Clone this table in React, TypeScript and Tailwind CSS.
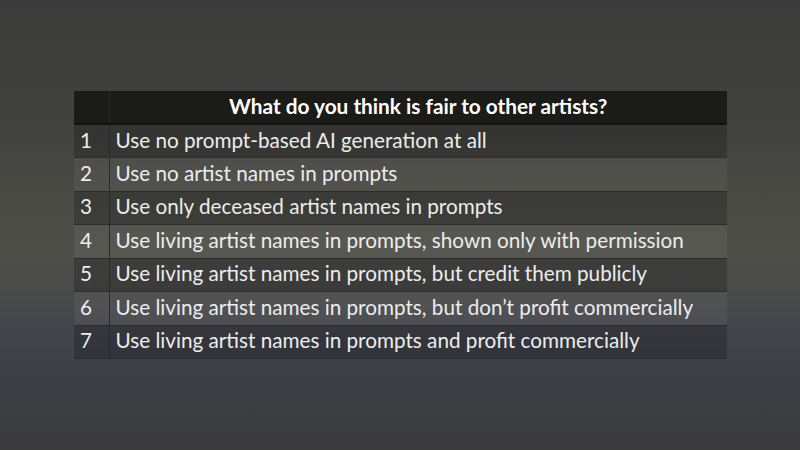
const rows = [
  'Use no prompt-based AI generation at all',
  'Use no artist names in prompts',
  'Use only deceased artist names in prompts',
  'Use living artist names in prompts, shown only with permission',
  'Use living artist names in prompts, but credit them publicly',
  'Use living artist names in prompts, but don\u2019t profit commercially',
  'Use living artist names in prompts and profit commercially',
]

export default function App() {
  return (
    <main className="w-[800px] h-[450px] overflow-hidden bg-[linear-gradient(180deg,#3b3b3b_0%,#42423f_30%,#4f4f49_55%,#46474a_70%,#3f424a_78%,#3a3a3b_100%)] pt-[91px] pl-[74px] font-['Lato',sans-serif]">
      <table className="w-[653px] border-collapse text-[#ececec]">
        <thead>
          <tr className="h-[33px] bg-[#1b1b18] border-b-2 border-[#121210]">
            <th className="w-[35px] border-r border-[#2a2a27]"></th>
            <th className="pb-[2px] text-[20.8px] font-bold text-white text-center leading-none">
              What do you think is fair to other artists?
            </th>
          </tr>
        </thead>
        <tbody>
          {rows.map((text, i) => (
            <tr
              key={i}
              className={
                i % 2 === 0
                  ? 'h-[33.5px] bg-black/20 border-b border-[#2c2c2a]'
                  : 'h-[33.5px] bg-white/5 border-b border-[#2c2c2a]'
              }
            >
              <td className="pl-[6px] pb-[2px] text-[20.7px] leading-none border-r border-[#2a2a28]">{i + 1}</td>
              <td className="pl-[6px] pb-[2px] text-[20.7px] leading-none">{text}</td>
            </tr>
          ))}
        </tbody>
      </table>
    </main>
  )
}
